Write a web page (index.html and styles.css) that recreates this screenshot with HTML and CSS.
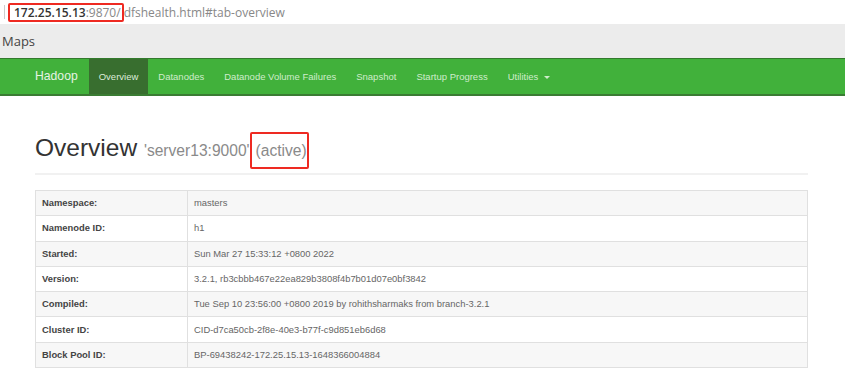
FILE: index.html
```html
<!DOCTYPE html>
<html lang="en">
<head>
    <meta charset="UTF-8">
    <title>Namenode information</title>
    <link rel="stylesheet" href="styles.css">
</head>
<body>
    <div class="urlbar">
        <span class="cursor"></span>
        <span class="mark url-mark"><span class="host">172.25.15.13</span>:9870/</span><span class="path">dfshealth.html#tab-overview</span>
    </div>

    <div class="bookmarks">Maps</div>

    <nav class="navbar">
        <div class="nav-inner">
            <a class="brand" href="#">Hadoop</a>
            <ul class="nav">
                <li class="active"><a href="#tab-overview">Overview</a></li>
                <li><a href="#tab-datanode">Datanodes</a></li>
                <li><a href="#tab-datanode-volume-failures">Datanode Volume Failures</a></li>
                <li><a href="#tab-snapshot">Snapshot</a></li>
                <li><a href="#tab-startup-progress">Startup Progress</a></li>
                <li><a href="#">Utilities <b class="caret"></b></a></li>
            </ul>
        </div>
    </nav>

    <div class="container">
        <div class="page-header">
            <h1>Overview <small>'server13:9000'<span class="mark state-mark">(active)</span></small></h1>
        </div>

        <table class="info">
            <tr><th>Namespace:</th><td>masters</td></tr>
            <tr><th>Namenode ID:</th><td>h1</td></tr>
            <tr><th>Started:</th><td>Sun Mar 27 15:33:12 +0800 2022</td></tr>
            <tr><th>Version:</th><td>3.2.1, rb3cbbb467e22ea829b3808f4b7b01d07e0bf3842</td></tr>
            <tr><th>Compiled:</th><td>Tue Sep 10 23:56:00 +0800 2019 by rohithsharmaks from branch-3.2.1</td></tr>
            <tr><th>Cluster ID:</th><td>CID-d7ca50cb-2f8e-40e3-b77f-c9d851eb6d68</td></tr>
            <tr><th>Block Pool ID:</th><td>BP-69438242-172.25.15.13-1648366004884</td></tr>
        </table>
    </div>
</body>
</html>
```

FILE: styles.css
```css
body {
    margin: 0;
    background-color: #fff;
    font-family: "Liberation Sans", Arial, sans-serif;
    color: #333;
}
.urlbar {
    height: 24px;
    display: flex;
    align-items: center;
    padding-left: 4px;
    font-family: "Open Sans", "DejaVu Sans", sans-serif;
    font-size: 12px;
    color: #888;
    white-space: nowrap;
}
.cursor {
    width: 1px;
    height: 14px;
    background-color: #ccc;
    margin-right: 3px;
}
.mark {
    border: 2px solid #ee2a22;
    border-radius: 2px;
}
.url-mark {
    padding: 0 1px 0 4px;
    line-height: 15px;
}
.host {
    color: #333;
    font-weight: 600;
}
.bookmarks {
    height: 34px;
    line-height: 34px;
    background-color: #ececec;
    padding-left: 2px;
    font-family: "Open Sans", "DejaVu Sans", sans-serif;
    font-size: 13px;
    color: #444;
}
.navbar {
    background-color: #41b13b;
    border-top: 1px solid #337a2d;
    border-bottom: 2px solid #3a7c33;
    height: 35px;
}
.nav-inner {
    display: flex;
    align-items: stretch;
    height: 100%;
    padding-left: 35px;
}
.brand {
    font-size: 12.2px;
    line-height: 35px;
    padding-right: 11px;
    color: #e6f4e4;
    text-decoration: none;
}
.nav {
    display: flex;
    list-style: none;
    margin: 0;
    padding: 0;
}
.nav a {
    display: block;
    padding: 0 10px;
    line-height: 35px;
    font-size: 9.5px;
    color: #cfeccb;
    text-decoration: none;
}
.nav .active a {
    background-color: #386e2f;
    color: #dcebd9;
}
.caret {
    display: inline-block;
    width: 0;
    height: 0;
    margin-left: 3px;
    vertical-align: middle;
    border-top: 3px solid #cfeccb;
    border-left: 3px solid transparent;
    border-right: 3px solid transparent;
}
.container {
    width: 773px;
    margin-left: 35px;
}
.page-header {
    margin-top: 36px;
    padding-bottom: 6px;
    border-bottom: 2px solid #f1f1f1;
    margin-bottom: 15px;
}
h1 {
    margin: 0;
    font-size: 24.5px;
    font-weight: normal;
    line-height: 32px;
    color: #333;
}
h1 small {
    font-size: 15.6px;
    color: #8a8a8a;
}
.state-mark {
    padding: 8px 0 8px 4px;
}
.info {
    width: 100%;
    border-collapse: collapse;
    border: 1px solid #e0e0e0;
    font-size: 9.4px;
}
.info th,
.info td {
    text-align: left;
    line-height: 14px;
    padding: 5.15px 6px;
    border-top: 1px solid #e0e0e0;
}
.info th {
    width: 139px;
    font-weight: bold;
    color: #444;
    border-right: 1px solid #e0e0e0;
}
.info td {
    color: #666;
}
.info tr:nth-child(odd) {
    background-color: #f7f7f7;
}
```
